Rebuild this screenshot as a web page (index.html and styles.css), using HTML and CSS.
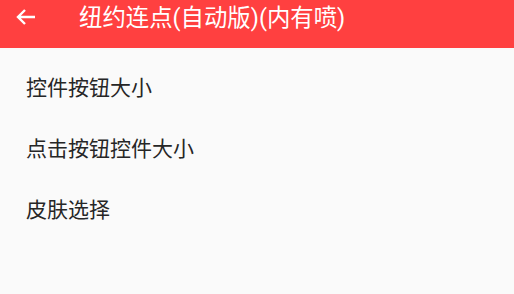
FILE: index.html
```html
<!DOCTYPE html>
<html>
<head>
<meta charset="utf-8">
<link rel="stylesheet" href="styles.css">
</head>
<body>
<div class="app">
  <header class="toolbar">
    <span class="back">
      <svg width="20" height="16" viewBox="0 0 20 16"><path d="M19 8H2M9 1L2 8l7 7" fill="none" stroke="#fff" stroke-width="2.4"/></svg>
    </span>
    <span class="title">纽约连点(自动版)(内有喷)</span>
  </header>
  <ul class="list">
    <li class="item">控件按钮大小</li>
    <li class="item">点击按钮控件大小</li>
    <li class="item">皮肤选择</li>
  </ul>
</div>
</body>
</html>
```
FILE: styles.css
```css
html, body { margin: 0; padding: 0; }
body {
  width: 514px; height: 294px; overflow: hidden;
  background: #fafafa;
  font-family: Roboto, "Noto Sans CJK SC", sans-serif;
}
.toolbar {
  height: 48px;
  background: #ff4040;
  display: flex;
  align-items: flex-start;
  color: #fff;
}
.back {
  width: 20px; height: 16px;
  margin: 9px 0 0 16px;
  display: block;
}
.back svg { display: block; }
.title {
  margin-left: 43px;
  font-size: 23.4px;
  line-height: 36px;
  white-space: nowrap;
}
.list {
  list-style: none;
  margin: 0;
  padding: 7px 0 0 26px;
}
.item {
  height: 61px;
  display: flex;
  align-items: center;
  font-size: 21px;
  color: #262626;
}
```
